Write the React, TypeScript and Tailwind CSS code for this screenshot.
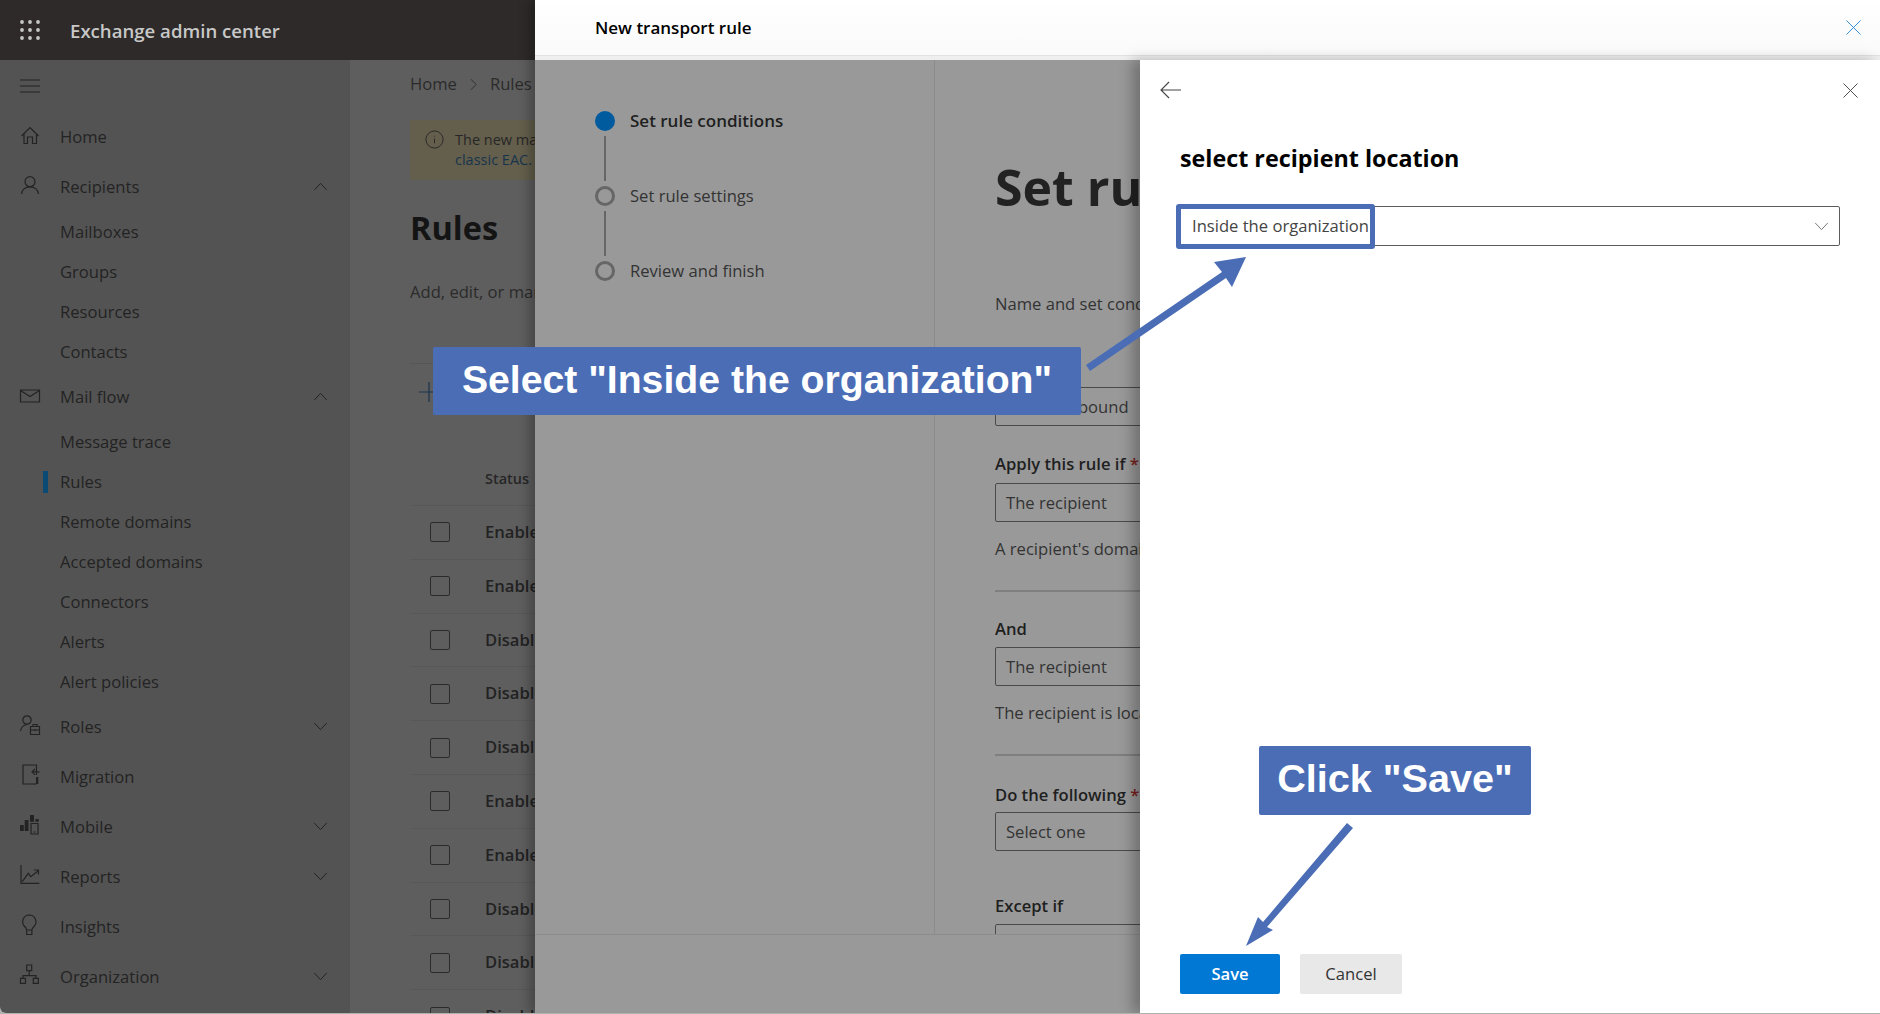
import React from "react";

const uiFont = "font-['Open_Sans','Noto_Sans',sans-serif]";

// Outline nav icons, drawn on a 20 box; some reach a little above it like the originals
const Ico = ({ children }: { children: React.ReactNode }) => (
  <svg viewBox="0 0 20 20" fill="none" stroke="currentColor" strokeWidth="1.2" className="h-[20px] w-[20px] overflow-visible">
    {children}
  </svg>
);

const icons: Record<string, React.ReactNode> = {
  home: <path d="M1.500 9 10 .5 18.500 9M4 6.500V16.500H7.500V10H12.500V16.500H16.500V6.500" />,
  user: (
    <>
      <circle cx="10" cy="4.700" r="5" />
      <path d="M1.500 17C2 12.500 5.500 9.800 10 9.800S18 12.500 18.500 17" />
    </>
  ),
  mail: <path d="M.5 3H19.500V15H.5ZM.5 3.500 10 9.500 19.500 3.500" />,
  roles: (
    <>
      <circle cx="7" cy="3" r="4.200" />
      <path d="M.5 14C1 10.500 3.500 8 7 7.500M10.500 9.500H19.500V17.500H10.500ZM13 9.500V7.500H17V9.500M10.500 13H19.500M15 12V14" />
    </>
  ),
  migration: (
    <>
      <path d="M16.500 8V-2H3V17H16.500M19.500 4.800H12M15 1.800 12 4.800 15 7.800" />
      <path fill="currentColor" stroke="none" d="M16 10H18.300V17H16Z" />
    </>
  ),
  mobile: (
    <>
      <path d="M11 6.500H18V17H11ZM13.500 15H15.500" />
      <path fill="currentColor" stroke="none" d="M0 8H3.800V14H0ZM4.700 3H8.500V14H4.700ZM10 -2H14V4.700H10ZM15.500 2H18.700V4.700H15.500Z" />
    </>
  ),
  reports: <path d="M1 -2V16.300H19.300M2.300 14.700 8.300 6.300 10.700 9.700 18.300 3.700M13.800 3H18.500V7.500" />,
  insights: (
    <path d="M9.300 -2A6.700 6.700 0 0 0 4.700 9.500C6 11 6.700 12 6.700 13H11.900C11.900 12 12.600 11 13.900 9.500A6.700 6.700 0 0 0 9.300 -2ZM6.700 13V17.500H11.900V13" />
  ),
  org: <path d="M6.700 -2H11.700V3.700H6.700ZM.5 11.300H5.500V16.300H.5ZM13.300 11.300H18.300V16.300H13.300ZM9.200 3.700V8.700M3 11.300V8.700H16V11.300" />,
};

const Chevron = ({ up = false }: { up?: boolean }) => (
  <svg viewBox="0 0 16 10" fill="none" stroke="currentColor" strokeWidth="1.1" className="h-[9px] w-[15px]">
    <path d={up ? "M1 9 8 1.500 15 9" : "M1 1l7 7.500L15 1"} />
  </svg>
);

const CloseIcon = ({ className }: { className: string }) => (
  <svg viewBox="0 0 16 16" fill="none" stroke="currentColor" strokeWidth="1" className={className}>
    <path d="M.5.500l15 15M15.500.500l-15 15" />
  </svg>
);

type NavEntry = { label: string; icon?: string; chevron?: "up" | "down"; active?: boolean };

const nav: NavEntry[] = [
  { label: "Home", icon: "home" },
  { label: "Recipients", icon: "user", chevron: "up" },
  { label: "Mailboxes" },
  { label: "Groups" },
  { label: "Resources" },
  { label: "Contacts" },
  { label: "Mail flow", icon: "mail", chevron: "up" },
  { label: "Message trace" },
  { label: "Rules", active: true },
  { label: "Remote domains" },
  { label: "Accepted domains" },
  { label: "Connectors" },
  { label: "Alerts" },
  { label: "Alert policies" },
  { label: "Roles", icon: "roles", chevron: "down" },
  { label: "Migration", icon: "migration" },
  { label: "Mobile", icon: "mobile", chevron: "down" },
  { label: "Reports", icon: "reports", chevron: "down" },
  { label: "Insights", icon: "insights" },
  { label: "Organization", icon: "org", chevron: "down" },
];

const statuses = ["Enabled", "Enabled", "Disabled", "Disabled", "Disabled", "Enabled", "Enabled", "Disabled", "Disabled", "Disabled"];

function Sidebar() {
  return (
    <aside className="w-[350px] shrink-0 bg-[#535353] text-[#232323]">
      <div className="flex h-[52px] items-center pl-[20px]">
        <svg viewBox="0 0 20 14" stroke="currentColor" strokeWidth="1" className="h-[14px] w-[20px]">
          <path d="M0 1h20M0 7h20M0 13h20" />
        </svg>
      </div>
      {nav.map((item) =>
        item.icon ? (
          <div key={item.label} className="flex h-[50px] items-center">
            <div className="flex w-[60px] justify-center">
              <Ico>{icons[item.icon]}</Ico>
            </div>
            <span className="text-[16.6px]">{item.label}</span>
            {item.chevron && (
              <span className="-mt-[2px] ml-auto mr-[22px] flex">
                <Chevron up={item.chevron === "up"} />
              </span>
            )}
          </div>
        ) : (
          <div key={item.label} className="relative flex h-[40px] items-center pl-[60px] text-[16.6px]">
            {item.active && <span className="absolute left-[43px] h-[22px] w-[5px] bg-[#0b4a75]" />}
            {item.label}
          </div>
        )
      )}
    </aside>
  );
}

function RulesPage() {
  return (
    <main className="flex-1 bg-[#5e5e5e] pl-[60px] pt-[12px] text-[#262626]">
      <div className="flex h-[24px] items-center text-[16.6px] text-[#2b2b2b]">
        <span>Home</span>
        <svg viewBox="0 0 8 14" fill="none" stroke="currentColor" strokeWidth="1" className="mx-[13px] h-[13px] w-[7px]">
          <path d="M1 1l6 6-6 6" />
        </svg>
        <span>Rules</span>
      </div>
      <div className="mt-[24px] flex h-[60px] w-[600px] bg-[#645f4c] pl-[15px] pt-[10px] text-[14.5px] leading-[20px]">
        <svg viewBox="0 0 20 20" fill="none" stroke="currentColor" strokeWidth="1" className="mr-[11px] h-[19px] w-[19px] shrink-0">
          <circle cx="10" cy="10" r="9" />
          <path d="M10 9v5M10 6v1" />
        </svg>
        <div>
          <p>The new mail flow rules</p>
          <p className="text-[#17344c]">classic EAC.</p>
        </div>
      </div>
      <h1 className="mt-[24px] h-[48px] text-[32.5px] font-bold leading-[48px] text-[#141414]">Rules</h1>
      <p className="mt-[28px] h-[24px] text-[16.6px] leading-[24px] text-[#2b2b2b]">Add, edit, or manage rules</p>
      <div className="mt-[59px] h-px bg-[#565656]" />
      <div className="flex h-[56px] items-center pl-[9px] text-[#17344c]">
        <svg viewBox="0 0 20 20" stroke="currentColor" strokeWidth="1.2" className="h-[20px] w-[20px]">
          <path d="M10 0v20M0 10h20" />
        </svg>
      </div>
      <div className="mt-[47px] h-[24px] pl-[75px] text-[14.5px] font-semibold leading-[24px]">Status</div>
      <div className="mt-[14px] border-t border-[#585858]">
        {statuses.map((status, i) => (
          <div key={i} className="flex h-[53.8px] items-center border-b border-[#585858] pl-[20px]">
            <span className="h-[20px] w-[20px] rounded-[2px] border border-[#2b2b2b]" />
            <span className="ml-[35px] text-[16.6px] font-semibold text-[#222222]">{status}</span>
          </div>
        ))}
      </div>
    </main>
  );
}

function Step({ label, current = false }: { label: string; current?: boolean }) {
  return (
    <div className="flex h-[20px] items-center">
      {current ? (
        <span className="h-[20px] w-[20px] rounded-full bg-[#005a9e]" />
      ) : (
        <span className="h-[20px] w-[20px] rounded-full border-[3px] border-[#666666]" />
      )}
      <span className={current ? "ml-[15px] text-[17px] font-semibold text-[#1f1f1f]" : "ml-[15px] text-[16.6px] text-[#333333]"}>{label}</span>
    </div>
  );
}

const StepLine = () => <div className="my-[5px] ml-[9px] h-[45px] w-[2px] bg-[#666666]" />;

const Label = ({ className, children, req = false }: { className: string; children: React.ReactNode; req?: boolean }) => (
  <div className={`${className} h-[24px] whitespace-nowrap text-[16.6px] font-semibold leading-[24px] text-[#1f1f1f]`}>
    {children}
    {req && <span className="text-[#7a1f1f]"> *</span>}
  </div>
);

const Input = ({ className, value }: { className: string; value?: string }) => (
  <div className={`${className} flex h-[39px] w-[700px] items-center rounded-[2px] border border-[#4a4a4a] pl-[10px] pt-[2px] text-[16.6px] text-[#333333]`}>{value}</div>
);

function TransportPanel() {
  return (
    <section className="absolute bottom-0 left-[535px] right-0 top-0 flex flex-col bg-[#999999] shadow-[-6px_0_10px_rgba(0,0,0,0.25)]">
      <header className="flex h-[56px] items-center justify-between border-b border-[#e2e2e2] bg-gradient-to-b from-white to-[#fafafa] pl-[60px] pr-[19px]">
        <h2 className="mt-[1px] text-[17px] font-semibold text-black">New transport rule</h2>
        <CloseIcon className="h-[15px] w-[15px] text-[#2b88d8]" />
      </header>
      <div className="h-[4px] bg-[#efefef]" />
      <div className="flex h-[875px] border-b border-[#8c8c8c]">
        <div className="w-[400px] shrink-0 border-r border-[#8c8c8c] pl-[60px] pt-[51px]">
          <Step label="Set rule conditions" current />
          <StepLine />
          <Step label="Set rule settings" />
          <StepLine />
          <Step label="Review and finish" />
        </div>
        <div className="flex-1 overflow-hidden pl-[60px]">
          <h1 className="mt-[97px] h-[60px] whitespace-nowrap text-[50px] font-bold leading-[60px] text-[#222222]">Set rule conditions</h1>
          <p className="mt-[75px] h-[24px] whitespace-nowrap text-[16.6px] leading-[24px] text-[#333333]">Name and set conditions for your transport rule</p>
          <Input className="mt-[71px]" value="Block outbound" />
          <Label className="mt-[26px]" req>Apply this rule if</Label>
          <Input className="mt-[7px]" value="The recipient" />
          <p className="mt-[15px] h-[24px] whitespace-nowrap text-[16.6px] leading-[24px] text-[#333333]">A recipient's domain is</p>
          <div className="mt-[29px] h-[2px] w-[700px] bg-[#7f7f7f]" />
          <Label className="mt-[25px]">And</Label>
          <Input className="mt-[6px]" value="The recipient" />
          <p className="mt-[15px] h-[24px] whitespace-nowrap text-[16.6px] leading-[24px] text-[#333333]">The recipient is located</p>
          <div className="mt-[29px] h-[2px] w-[700px] bg-[#7f7f7f]" />
          <Label className="mt-[27px]" req>Do the following</Label>
          <Input className="mt-[5px]" value="Select one" />
          <Label className="mt-[43px]">Except if</Label>
          <Input className="mt-[6px]" />
        </div>
      </div>
    </section>
  );
}

function LocationPanel() {
  return (
    <section className="absolute bottom-0 left-[1140px] right-0 top-[60px] flex flex-col bg-white px-[40px] shadow-[-8px_0_12px_rgba(0,0,0,0.25)]">
      <div className="-mx-[20px] flex h-[60px] items-center justify-between text-[#444444]">
        <svg viewBox="0 0 22 18" fill="none" stroke="currentColor" strokeWidth="1.1" className="h-[18px] w-[22px]">
          <path d="M21 9H1M9 1 1 9l8 8" />
        </svg>
        <CloseIcon className="mr-[2px] h-[15px] w-[15px]" />
      </div>
      <h2 className="mt-[20px] h-[36px] text-[23.3px] font-bold leading-[36px] text-black">select recipient location</h2>
      <div className="relative mt-[30px] flex h-[40px] w-[660px] items-center justify-between rounded-[2px] border border-[#5c5c5c] pl-[11px] pr-[10px] pt-[1px] text-[16.6px] text-[#444444]">
        <span>Inside the organization</span>
        <span className="text-[#777777]">
          <Chevron />
        </span>
        {/* annotation frame around the chosen value */}
        <span className="absolute left-[-5px] top-[-3px] h-[45px] w-[199px] rounded-[3px] border-[5px] border-[#4a6db5]" />
      </div>
      <div className="mt-auto flex gap-[20px] pb-[19px]">
        <button className="h-[40px] w-[100px] rounded-[2px] bg-[#0078d4] text-[16.6px] font-semibold text-white">Save</button>
        <button className="h-[40px] w-[102px] rounded-[2px] bg-[#e8e8e8] text-[16.6px] text-[#333333]">Cancel</button>
      </div>
    </section>
  );
}

// Tutorial annotations laid over the screenshot
function Annotations() {
  return (
    <>
      <div className="absolute left-[433px] top-[347px] flex h-[68px] w-[648px] items-center justify-center rounded-[2px] bg-[#4a6db5] pb-[2px] font-['Liberation_Sans',sans-serif] text-[39.2px] font-bold text-white">
        Select "Inside the organization"
      </div>
      <div className="absolute left-[1259px] top-[746px] flex h-[69px] w-[272px] items-center justify-center rounded-[2px] bg-[#4a6db5] pb-[4px] font-['Liberation_Sans',sans-serif] text-[39.6px] font-bold text-white">
        Click "Save"
      </div>
      <svg className="pointer-events-none absolute left-0 top-0 h-[1014px] w-[1880px]" viewBox="0 0 1880 1014" fill="#4a6db5">
        <path d="M1086 365 1222 272 1214 262 1246 257 1232 287 1226 278 1090 371Z" />
        <path d="M1347 823 1353 828 1267 927 1273 930 1246 946 1258 917 1263 922Z" />
      </svg>
    </>
  );
}

export default function App() {
  return (
    <div className="h-[1014px] w-[1880px] bg-[#b0b0b0]">
      <div className={`${uiFont} relative flex h-[1013px] w-[1880px] flex-col overflow-hidden rounded-bl-[6px] bg-white`}>
        <header className="flex h-[60px] shrink-0 items-center bg-[#2d2a29] text-[#c8c8c8]">
          <svg viewBox="0 0 20 20" fill="currentColor" className="ml-[20px] h-[20px] w-[20px]">
            {[2, 10, 18].map((y) =>
              [2, 10, 18].map((x) => <circle key={`${x}-${y}`} cx={x} cy={y} r="1.900" />)
            )}
          </svg>
          <span className="ml-[30px] mt-[1px] text-[18.6px] font-semibold">Exchange admin center</span>
        </header>
        <div className="flex flex-1 overflow-hidden">
          <Sidebar />
          <RulesPage />
        </div>
        <TransportPanel />
        <LocationPanel />
        <Annotations />
      </div>
    </div>
  );
}
